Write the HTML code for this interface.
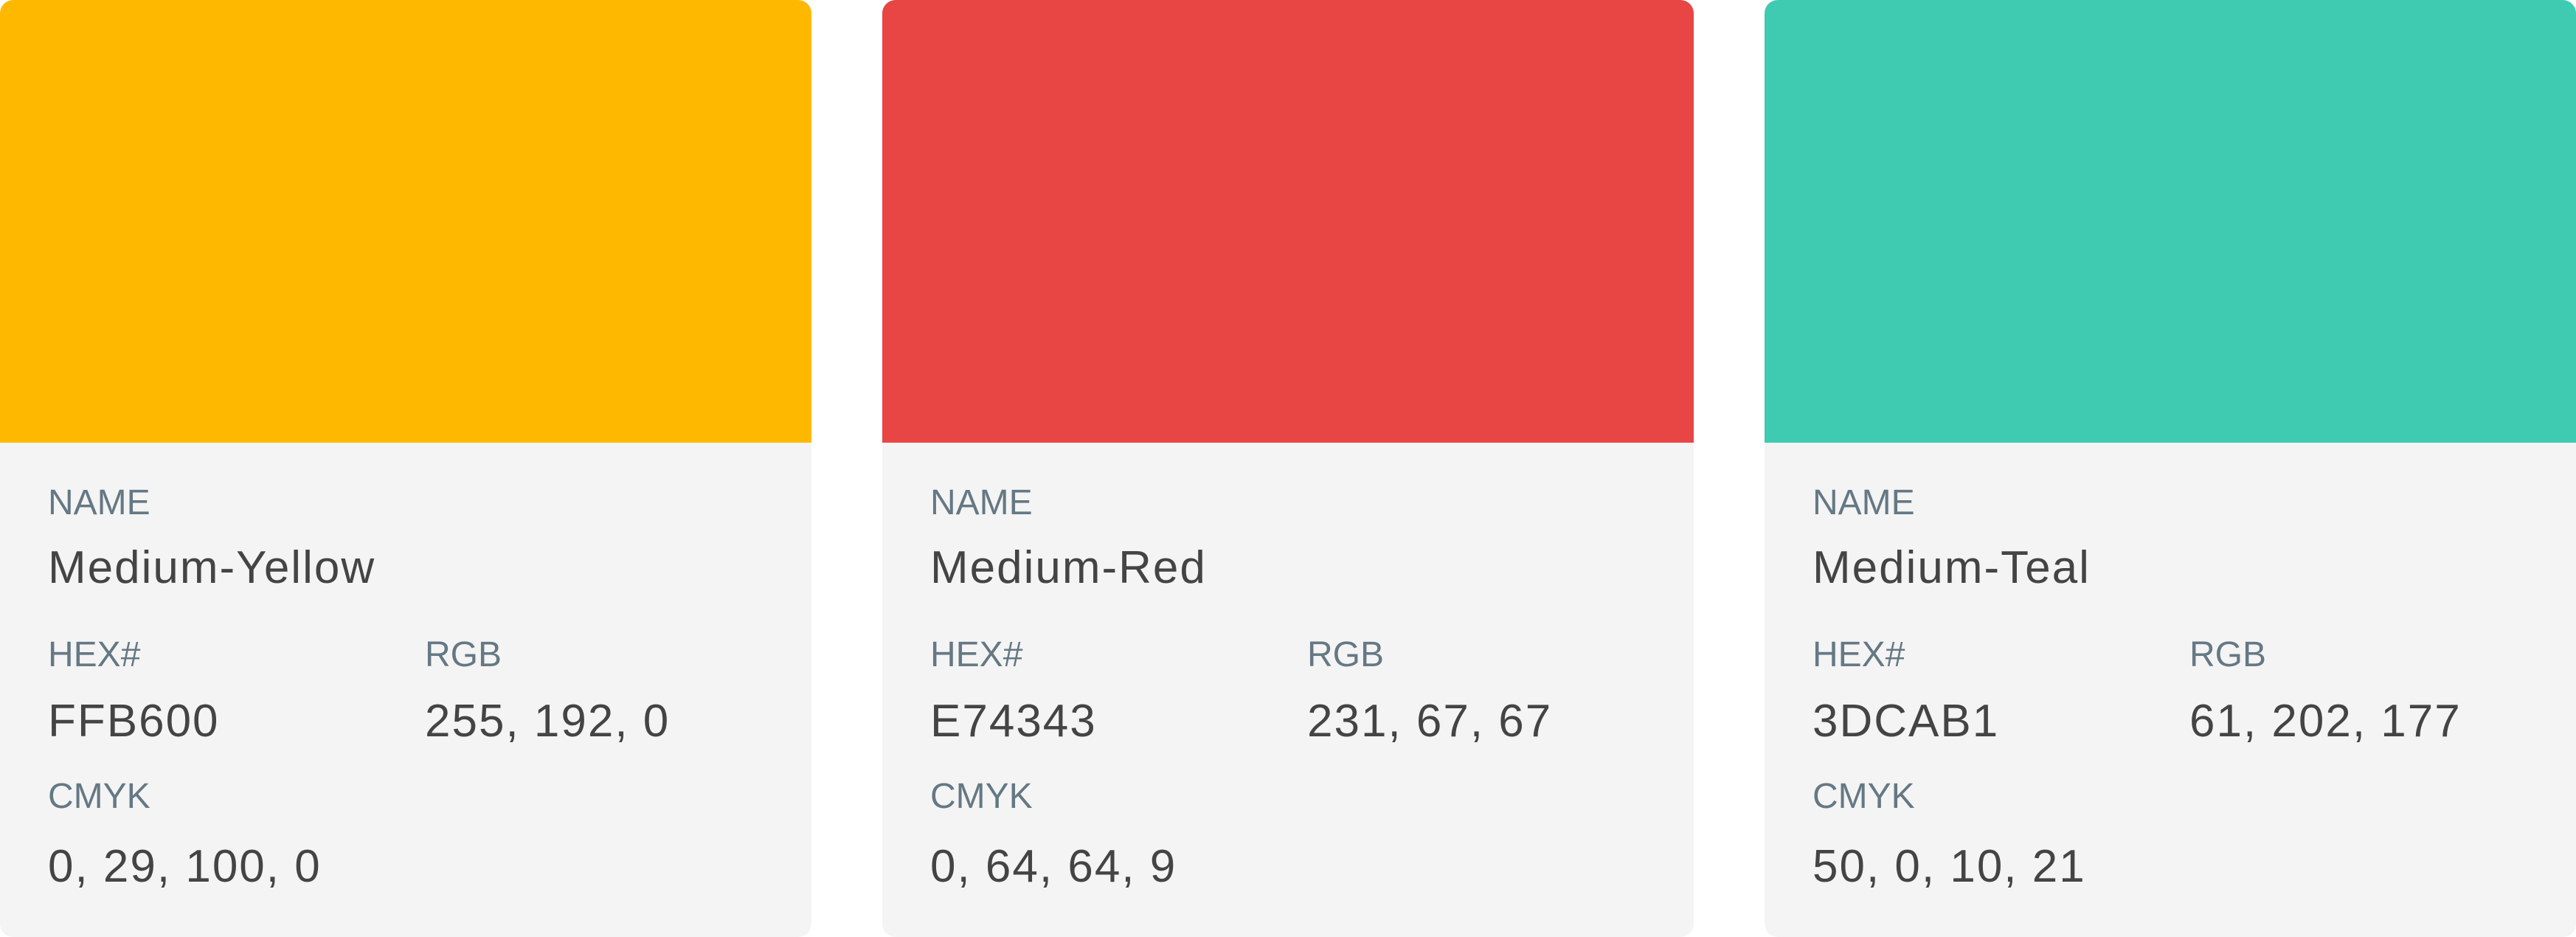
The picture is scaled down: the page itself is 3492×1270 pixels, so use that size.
<!DOCTYPE html>
<html><head><meta charset="utf-8"><style>
html,body{margin:0;padding:0;background:#fff;width:3492px;height:1270px;overflow:hidden}
.card{position:absolute;top:0;width:1100px;height:1270px;background:#f4f4f4;border-radius:18px;overflow:hidden;font-family:"Liberation Sans",sans-serif}
.sw{position:absolute;left:0;top:0;width:1100px;height:600px}
.t{position:absolute;white-space:nowrap;line-height:1}
.l{font-size:48px;color:#657884;margin-top:2px}
.v{font-size:62px;color:#444;letter-spacing:2px;margin-top:3px}
</style></head><body>
<div class="card" style="left:0"><div class="sw" style="background:#FFB800"></div>
<div class="t l" style="left:65px;top:656px">NAME</div>
<div class="t v" style="left:65px;top:736px">Medium-Yellow</div>
<div class="t l" style="left:65px;top:862px">HEX#</div>
<div class="t l" style="left:576px;top:862px">RGB</div>
<div class="t v" style="left:65px;top:944px">FFB600</div>
<div class="t v" style="left:576px;top:944px">255, 192, 0</div>
<div class="t l" style="left:65px;top:1054px">CMYK</div>
<div class="t v" style="left:65px;top:1141px">0, 29, 100, 0</div>
</div>
<div class="card" style="left:1196px"><div class="sw" style="background:#E84545"></div>
<div class="t l" style="left:65px;top:656px">NAME</div>
<div class="t v" style="left:65px;top:736px">Medium-Red</div>
<div class="t l" style="left:65px;top:862px">HEX#</div>
<div class="t l" style="left:576px;top:862px">RGB</div>
<div class="t v" style="left:65px;top:944px">E74343</div>
<div class="t v" style="left:576px;top:944px">231, 67, 67</div>
<div class="t l" style="left:65px;top:1054px">CMYK</div>
<div class="t v" style="left:65px;top:1141px">0, 64, 64, 9</div>
</div>
<div class="card" style="left:2392px"><div class="sw" style="background:#3ECBB2"></div>
<div class="t l" style="left:65px;top:656px">NAME</div>
<div class="t v" style="left:65px;top:736px">Medium-Teal</div>
<div class="t l" style="left:65px;top:862px">HEX#</div>
<div class="t l" style="left:576px;top:862px">RGB</div>
<div class="t v" style="left:65px;top:944px">3DCAB1</div>
<div class="t v" style="left:576px;top:944px">61, 202, 177</div>
<div class="t l" style="left:65px;top:1054px">CMYK</div>
<div class="t v" style="left:65px;top:1141px">50, 0, 10, 21</div>
</div>
</body></html>
